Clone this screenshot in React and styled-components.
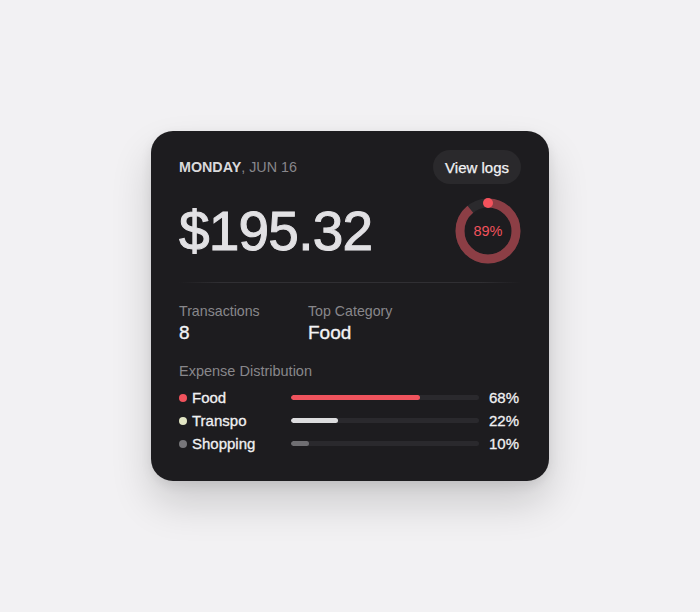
import React from "react";
import styled, { createGlobalStyle } from "styled-components";

const GlobalStyle = createGlobalStyle`
  html, body {
    margin: 0;
    padding: 0;
    background: #f2f1f3;
    font-family: "Liberation Sans", Arial, sans-serif;
  }
`;

const Page = styled.div`
  width: 100vw;
  height: 100vh;
  display: flex;
  align-items: center;
  justify-content: center;
`;

const Card = styled.div`
  width: 398px;
  box-sizing: border-box;
  padding: 19px 28px 26px;
  background: #1d1c1f;
  border-radius: 22px;
  box-shadow: 0 22px 40px rgba(0, 0, 0, 0.16), 0 4px 12px rgba(0, 0, 0, 0.08);
  color: #ececee;
`;

const Header = styled.div`
  display: flex;
  align-items: center;
  justify-content: space-between;
`;

const DateText = styled.div`
  font-size: 14.3px;
  color: #88878b;
  strong {
    color: #d9d9db;
    font-weight: 700;
  }
`;

const LogsButton = styled.button`
  height: 34px;
  padding: 0 12px;
  border: none;
  border-radius: 17px;
  background: #2a292c;
  color: #f2f2f4;
  font-family: inherit;
  font-size: 15px;
  -webkit-text-stroke: 0.25px #f2f2f4;
  cursor: pointer;
`;

const AmountRow = styled.div`
  display: flex;
  align-items: center;
  justify-content: space-between;
  margin-top: 14px;
`;

const Amount = styled.div`
  font-size: 55px;
  letter-spacing: -0.8px;
  color: #e2e1e4;
  line-height: 1;
  -webkit-text-stroke: 1px #e2e1e4;
`;

const RingWrap = styled.div`
  position: relative;
  width: 66px;
  height: 66px;
`;

const RingLabel = styled.div`
  position: absolute;
  inset: 0;
  display: flex;
  align-items: center;
  justify-content: center;
  font-size: 14.5px;
  color: #f0525c;
`;

const Divider = styled.div`
  height: 1px;
  margin: 18px 0 19px;
  background: linear-gradient(
    90deg,
    rgba(50, 49, 53, 0) 0%,
    #302f33 12%,
    #302f33 88%,
    rgba(50, 49, 53, 0) 100%
  );
`;

const Stats = styled.div`
  display: grid;
  grid-template-columns: 129px 1fr;
`;

const StatLabel = styled.div`
  font-size: 14.2px;
  color: #88878b;
  line-height: 17px;
  margin-top: 1px;
`;

const StatValue = styled.div`
  font-size: 19px;
  color: #f2f2f4;
  line-height: 22px;
  margin-top: 2px;
  -webkit-text-stroke: 0.35px #f2f2f4;
`;

const SectionTitle = styled.div`
  font-size: 14.5px;
  color: #88878b;
  line-height: 17px;
  margin-top: 19px;
  margin-bottom: 6px;
`;

const Row = styled.div`
  display: grid;
  grid-template-columns: 112px 1fr 40px;
  align-items: center;
  height: 23px;
  padding-right: 2px;
`;

const Label = styled.div`
  display: flex;
  align-items: center;
  gap: 5px;
  font-size: 15px;
  color: #f0f0f2;
  -webkit-text-stroke: 0.3px #f0f0f2;
`;

const Dot = styled.span`
  width: 8px;
  height: 8px;
  border-radius: 50%;
  background: ${(p) => p.$color};
`;

const Track = styled.div`
  height: 5px;
  border-radius: 3px;
  background: #2a292d;
  overflow: hidden;
`;

const Fill = styled.div`
  height: 100%;
  border-radius: 3px;
  background: ${(p) => p.$color};
`;

const Pct = styled.div`
  text-align: right;
  font-size: 15px;
  color: #f0f0f2;
  -webkit-text-stroke: 0.3px #f0f0f2;
`;

const categories = [
  { name: "Food", pct: 68, bar: 68.5, dot: "#f0525c", fill: "#ef535d" },
  { name: "Transpo", pct: 22, bar: 25, dot: "#e2e5c3", fill: "#dcdcde" },
  { name: "Shopping", pct: 10, bar: 9.7, dot: "#77767a", fill: "#6f6e72" },
];

function Ring({ value }) {
  const r = 28;
  const c = 2 * Math.PI * r;
  return (
    <RingWrap>
      <svg width="66" height="66" viewBox="0 0 66 66">
        <circle cx="33" cy="33" r={r} fill="none" stroke="#2b2a2d" strokeWidth="9" />
        <circle
          cx="33"
          cy="33"
          r={r}
          fill="none"
          stroke="#8c3e45"
          strokeWidth="9"
          strokeDasharray={`${(c * value) / 100} ${c}`}
          transform="rotate(-90 33 33)"
        />
        <circle cx="33" cy={33 - r} r="5" fill="#f4525c" />
      </svg>
      <RingLabel>{value}%</RingLabel>
    </RingWrap>
  );
}

export default function App() {
  return (
    <Page>
      <GlobalStyle />
      <Card>
        <Header>
          <DateText>
            <strong>MONDAY</strong>, JUN 16
          </DateText>
          <LogsButton>View logs</LogsButton>
        </Header>
        <AmountRow>
          <Amount>$195.32</Amount>
          <Ring value={89} />
        </AmountRow>
        <Divider />
        <Stats>
          <div>
            <StatLabel>Transactions</StatLabel>
            <StatValue>8</StatValue>
          </div>
          <div>
            <StatLabel>Top Category</StatLabel>
            <StatValue>Food</StatValue>
          </div>
        </Stats>
        <SectionTitle>Expense Distribution</SectionTitle>
        {categories.map((cat) => (
          <Row key={cat.name}>
            <Label>
              <Dot $color={cat.dot} />
              {cat.name}
            </Label>
            <Track>
              <Fill $color={cat.fill} style={{ width: `${cat.bar}%` }} />
            </Track>
            <Pct>{cat.pct}%</Pct>
          </Row>
        ))}
      </Card>
    </Page>
  );
}
